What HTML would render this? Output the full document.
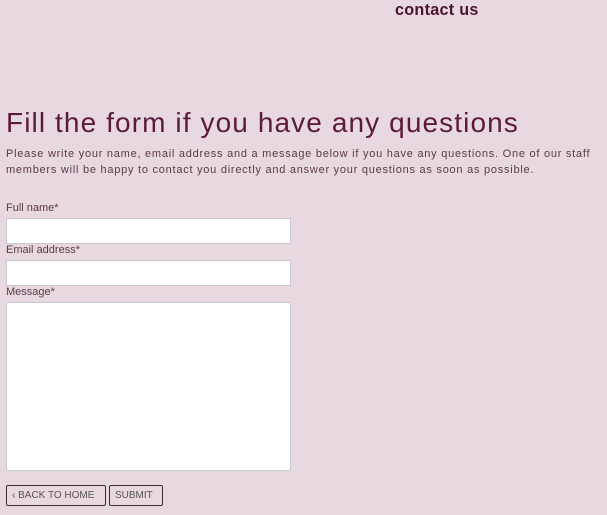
<!DOCTYPE html>
<html><head><style>
body{margin:0;width:607px;height:515px;background:#e8d8df;font-family:"Liberation Sans",sans-serif;color:#5a3a48;position:relative;overflow:hidden}
.nav{position:absolute;left:395px;top:0;font-size:17px;color:#4a1530;letter-spacing:0.3px;font-weight:bold;transform:scaleX(0.95);transform-origin:left}
h1{position:absolute;left:6px;top:107px;margin:0;font-weight:normal;font-size:28px;color:#5c1a3c;letter-spacing:1.1px;white-space:nowrap}
p{position:absolute;left:6px;top:146px;margin:0;font-size:11px;line-height:16px;width:605px;color:#5a3a48;letter-spacing:0.75px}
label{position:absolute;left:6px;font-size:11px;color:#5a3a48}
.in{position:absolute;left:6px;width:283px;background:#fff;border:1px solid #c8c8d0;border-radius:2px}
.btn{position:absolute;top:485px;height:21px;border:1px solid #333;border-radius:2px;font-size:10px;line-height:19px;color:#555;padding:0 5px;box-sizing:border-box;white-space:nowrap}
</style></head><body>
<div class="nav">contact us</div>
<h1>Fill the form if you have any questions</h1>
<p>Please write your name, email address and a message below if you have any questions. One of our staff<br>members will be happy to contact you directly and answer your questions as soon as possible.</p>
<label style="top:202px">Full name*</label>
<div class="in" style="top:218px;height:24px"></div>
<label style="top:244px">Email address*</label>
<div class="in" style="top:260px;height:24px"></div>
<label style="top:286px">Message*</label>
<div class="in" style="top:302px;height:167px"></div>
<div class="btn" style="left:6px;width:100px">‹ BACK TO HOME</div>
<div class="btn" style="left:109px;width:54px">SUBMIT</div>
</body></html>
